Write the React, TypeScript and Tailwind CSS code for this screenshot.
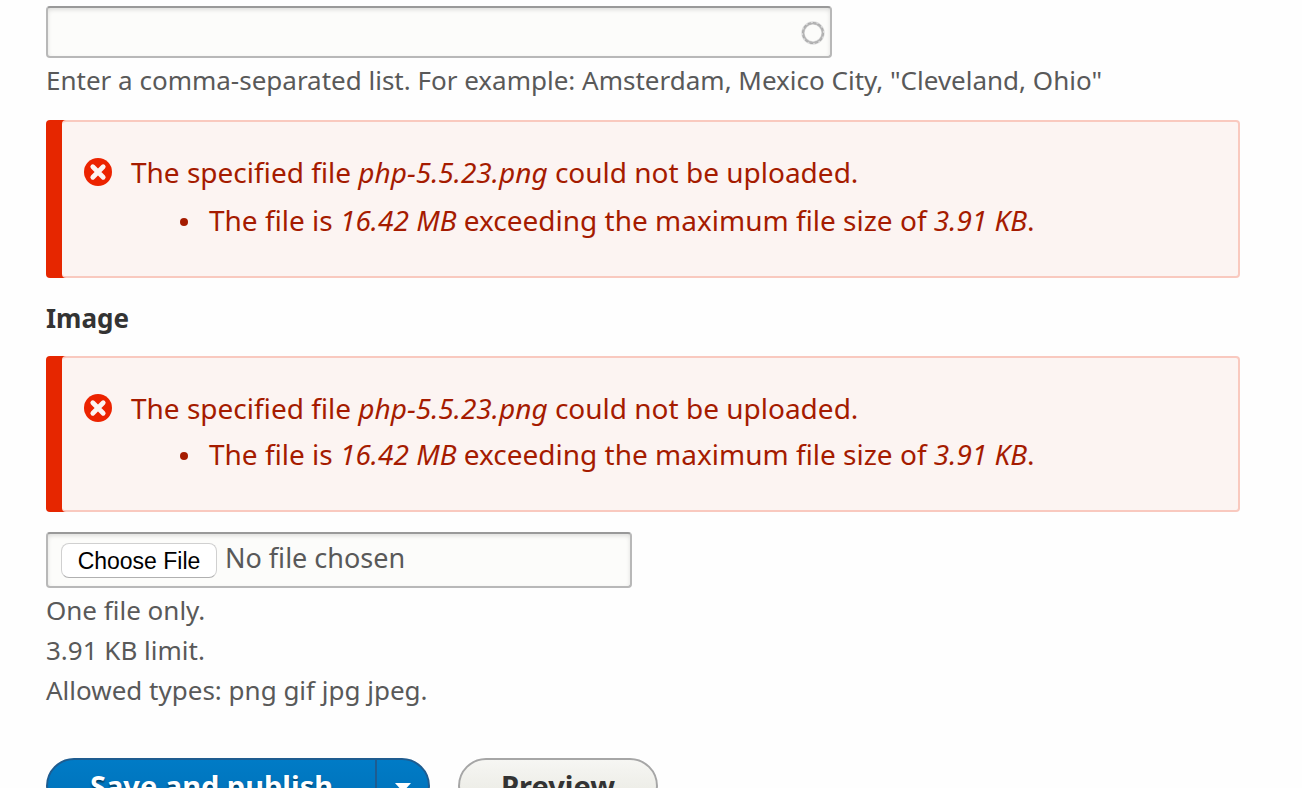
import React from "react";

function ErrorIcon() {
  return (
    <svg viewBox="0 0 28 28" className="mt-2 size-7 shrink-0" aria-hidden="true">
      <circle cx="14" cy="14" r="14" fill="#ec2300" />
      <path d="M8.8 8.8 19.2 19.2M19.2 8.8 8.8 19.2" stroke="#fcf4f2" strokeWidth="4.8" strokeLinecap="round" />
    </svg>
  );
}

function UploadError({ roomy = false }: { roomy?: boolean }) {
  return (
    <div
      role="alert"
      className="ml-4 flex gap-[19px] rounded-[4px] border-2 border-l-0 border-[#f9c9bf] bg-[#fcf4f2] pt-7 pr-6 pb-[34px] pl-[22px] text-[28px] leading-[44px] text-[#a51b00] shadow-[-16px_0_0_#e62600]"
    >
      <ErrorIcon />
      <div>
        <p>
          The specified file <em>php-5.5.23.png</em> could not be uploaded.
        </p>
        <ul className={roomy ? "pt-1 pl-[49px]" : "pt-0.5 pl-[49px]"}>
          <li className="flex gap-[21px]">
            <span className="mt-5 size-2 shrink-0 rounded-full bg-[#a51b00]" />
            <span>
              The file is <em>16.42 MB</em> exceeding the maximum file size of <em>3.91 KB</em>.
            </span>
          </li>
        </ul>
      </div>
    </div>
  );
}

export default function App() {
  return (
    <form
      className="min-h-screen bg-[#fefefe] pt-1.5 pr-[62px] pl-[46px] font-['Noto_Sans',sans-serif] text-[#595959]"
      onSubmit={(e) => e.preventDefault()}
    >
      <div className="relative max-w-[786px]">
        <input
          type="text"
          aria-label="Tags"
          aria-describedby="tags-help"
          className="block h-[52px] w-full rounded-[4px] border-2 border-[#b8b8b8] border-t-[#999] bg-[#fcfcfa] pr-12 pl-4 text-[26px] shadow-[inset_0_2px_4px_rgba(0,0,0,0.12)] outline-none"
        />
        <svg viewBox="0 0 24 24" className="absolute top-[15px] right-[7px] size-6" aria-hidden="true">
          <circle cx="12" cy="12" r="10" fill="none" stroke="#dcdcdc" strokeWidth="3.4" />
          <circle cx="12" cy="12" r="10" fill="none" stroke="#aaa" strokeWidth="2" strokeDasharray="3.2 2" />
          <circle cx="12" cy="12" r="9.6" fill="none" stroke="#b4b4b4" strokeWidth="1.4" />
        </svg>
      </div>
      <p id="tags-help" className="mt-0.5 text-[26px] leading-[40px]">
        Enter a comma-separated list. For example: Amsterdam, Mexico City, "Cleveland, Ohio"
      </p>

      <div className="mt-5">
        <UploadError roomy />
      </div>

      <label htmlFor="image" className="mt-5 mb-[18px] block w-fit text-[26px] leading-[40px] font-bold text-[#333]">
        Image
      </label>

      <UploadError />

      <input
        id="image"
        type="file"
        aria-describedby="image-help"
        className="mt-5 block h-[56px] w-full max-w-[586px] rounded-[4px] border-2 border-[#b8b8b8] border-t-[#999] bg-[#fcfcfa] pt-1.5 pl-[13px] text-[27px] leading-[36px] shadow-[inset_0_2px_4px_rgba(0,0,0,0.12)] file:mr-2 file:h-[35px] file:min-w-[156px] file:rounded-[8px] file:border file:border-solid file:border-[#d0d0d0] file:border-b-[#b0b0b0] file:bg-white file:px-[14px] file:align-middle file:font-['Liberation_Sans',sans-serif] file:text-[23px] file:leading-[30px] file:text-black"
      />
      <div id="image-help" className="mt-0.5 text-[26px] leading-[40px]">
        <p>One file only.</p>
        <p>3.91 KB limit.</p>
        <p>Allowed types: png gif jpg jpeg.</p>
      </div>

      <div className="mt-12 flex gap-7">
        <div className="flex h-[56px] rounded-full border-2 border-[#1e5c90] bg-linear-to-b from-[#007bc6] to-[#0071b8]">
          <button
            type="submit"
            className="border-r-2 border-[#1e5c90] px-[42px] text-[29px] leading-[50px] font-bold text-white [text-shadow:0_2px_2px_rgba(0,0,0,0.5)]"
          >
            Save and publish
          </button>
          <button type="button" aria-label="More save options" className="flex w-[51px] items-center justify-center pt-1">
            <svg viewBox="0 0 16 10" className="h-2.5 w-4" aria-hidden="true">
              <path d="M0 0H16L8 9Z" fill="#fff" />
            </svg>
          </button>
        </div>
        <button
          type="button"
          className="h-[56px] rounded-full border-2 border-[#a6a6a6] bg-linear-to-b from-[#f6f6f3] to-[#e7e7df] px-[41px] text-[29px] leading-[50px] font-bold text-[#333]"
        >
          Preview
        </button>
      </div>
    </form>
  );
}
